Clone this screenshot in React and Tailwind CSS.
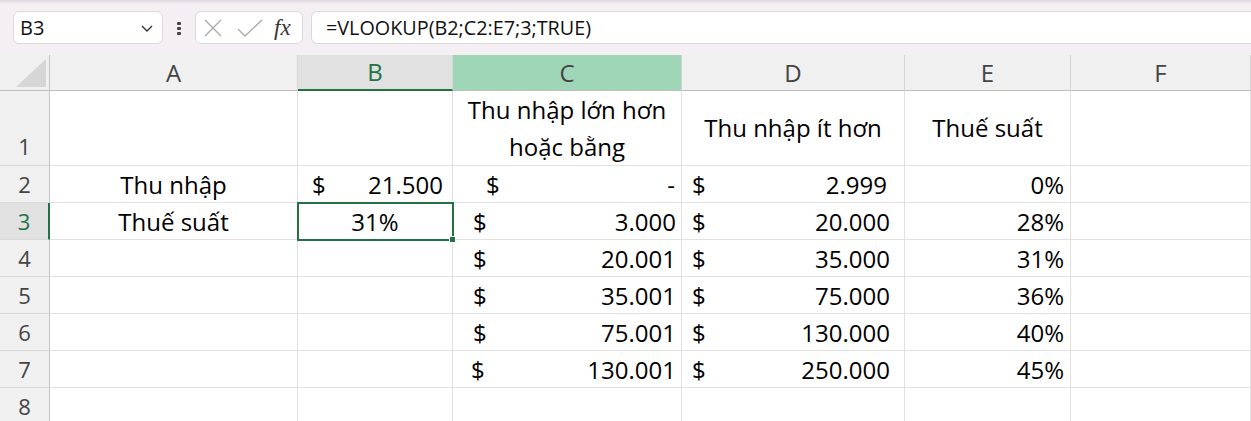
import React from "react";

const cols = ["A", "B", "C", "D", "E", "F"];

// accounting-style cell: "$" on the left, number on the right
function Money({ value, pl, pr }) {
  return (
    <div className={`flex h-full items-center justify-between ${pl} ${pr}`}>
      <span>$</span>
      <span>{value}</span>
    </div>
  );
}

const rows = [
  { c: "3.000", d: "20.000", e: "28%" },
  { c: "20.001", d: "35.000", e: "31%" },
  { c: "35.001", d: "75.000", e: "36%" },
  { c: "75.001", d: "130.000", e: "40%" },
  { c: "130.001", d: "250.000", e: "45%" },
];

function RowHead({ n, selected, tall }) {
  return (
    <div
      className={`flex justify-center border-b border-[#d9d9d9] text-[22px] leading-[37px] ${
        tall ? "items-end" : "items-center"
      } ${
        selected
          ? "border-r-2 border-r-[#217346] bg-[#e1e1e1] text-[#217346]"
          : "border-r border-r-[#c4c4c4] bg-[#f0f0f0] text-[#444]"
      }`}
    >
      {n}
    </div>
  );
}

const cell = "border-r border-b border-[#e1e1e1] bg-white";

export default function App() {
  return (
    <div
      className="h-[421px] w-[1251px] overflow-hidden bg-white text-black"
      style={{ fontFamily: '"Open Sans", "Noto Sans", sans-serif' }}
    >
      {/* formula bar */}
      <div className="relative h-[55px] bg-[#f3eff3]">
        <div className="h-[4px] bg-gradient-to-b from-[#dcd7dc] to-[#f3eff3]" />
        <div className="flex items-center pt-[7px]">
          <div className="ml-[13px] flex h-[33px] w-[150px] items-center justify-between rounded-[6px] border border-[#dcd8dc] bg-white pl-[6px] pr-[8px]">
            <span className="text-[20px] leading-none text-[#111]">B3</span>
            <svg width="14" height="10" viewBox="0 0 14 10">
              <path d="M2 3 L7 8 L12 3" fill="none" stroke="#333" strokeWidth="1.4" />
            </svg>
          </div>
          <div className="flex w-[32px] flex-col items-center gap-[2px] pt-[2px]">
            <span className="h-[3px] w-[4px] rounded-[1px] bg-[#444]" />
            <span className="h-[3px] w-[4px] rounded-[1px] bg-[#444]" />
            <span className="h-[3px] w-[4px] rounded-[1px] bg-[#444]" />
          </div>
          <div className="flex h-[33px] w-[108px] items-center rounded-[6px] border border-[#dcd8dc] bg-white pl-[7px]">
            <svg width="20" height="20" viewBox="0 0 20 20">
              <path d="M2 2 L18 18 M18 2 L2 18" stroke="#ababab" strokeWidth="1.4" fill="none" />
            </svg>
            <svg className="ml-[14px]" width="26" height="20" viewBox="0 0 26 20">
              <path d="M1 11 L8 18 L25 2" stroke="#ababab" strokeWidth="1.4" fill="none" />
            </svg>
            <span
              className="ml-[11px] text-[23px] italic leading-none text-[#333]"
              style={{ fontFamily: '"Liberation Serif", "DejaVu Serif", serif' }}
            >
              fx
            </span>
          </div>
          <div className="ml-[8px] flex h-[33px] flex-1 items-center rounded-l-[6px] border border-r-0 border-[#dcd8dc] bg-white pl-[14px]">
            <span className="text-[19.8px] leading-none text-[#111]">=VLOOKUP(B2;C2:E7;3;TRUE)</span>
          </div>
        </div>
      </div>

      {/* sheet */}
      <div className="grid grid-cols-[50px_248px_155px_229px_223px_166px_180px] grid-rows-[36px_75px_repeat(7,37px)] text-[24px]">
        {/* corner */}
        <div className="relative border-r border-b border-r-[#c4c4c4] border-b-[#bdbdbd] bg-[#f0f0f0]">
          <svg className="absolute bottom-[3px] right-[3px]" width="30" height="28" viewBox="0 0 30 28">
            <path d="M30 0 L30 28 L0 28 Z" fill="#d6d6d6" />
          </svg>
        </div>
        {cols.map((c) => {
          const bg =
            c === "B"
              ? "bg-[#e1e1e1] text-[#217346] border-b-2 border-b-[#217346]"
              : c === "C"
              ? "bg-[#a0d6b8] text-[#444] border-b border-b-[#bdbdbd]"
              : "bg-[#f0f0f0] text-[#444] border-b border-b-[#bdbdbd]";
          return (
            <div
              key={c}
              className={`flex items-center justify-center border-r border-r-[#d6d6d6] text-[24px] ${bg}`}
            >
              {c}
            </div>
          );
        })}

        {/* row 1 */}
        <RowHead n="1" tall />
        <div className={cell} />
        <div className={cell} />
        <div className={`${cell} flex flex-col items-center justify-center leading-[37px]`}>
          <span>Thu nhập lớn hơn</span>
          <span>hoặc bằng</span>
        </div>
        <div className={`${cell} flex items-center justify-center`}>Thu nhập ít hơn</div>
        <div className={`${cell} flex items-center justify-center`}>Thuế suất</div>
        <div className={cell} />

        {/* row 2 */}
        <RowHead n="2" />
        <div className={`${cell} flex items-center justify-center leading-[37px]`}>Thu nhập</div>
        <div className={`${cell} leading-[37px]`}>
          <Money value="21.500" pl="pl-[14px]" pr="pr-[9px]" />
        </div>
        <div className={`${cell} leading-[37px]`}>
          <Money value="-" pl="pl-[33px]" pr="pr-[6px]" />
        </div>
        <div className={`${cell} leading-[37px]`}>
          <Money value="2.999" pl="pl-[10px]" pr="pr-[17px]" />
        </div>
        <div className={`${cell} flex items-center justify-end pr-[6px] leading-[37px]`}>0%</div>
        <div className={cell} />

        {/* rows 3-7 */}
        {rows.map((r, i) => (
          <React.Fragment key={i}>
            <RowHead n={String(i + 3)} selected={i === 0} />
            <div className={`${cell} flex items-center justify-center leading-[37px]`}>
              {i === 0 ? "Thuế suất" : ""}
            </div>
            <div className={`${cell} relative flex items-center justify-center leading-[37px] ${i === 0 ? "z-10" : ""}`}>
              {i === 0 && (
                <>
                  <span>31%</span>
                  <div className="absolute -left-[1px] -top-[1px] h-[39px] w-[157px] border-2 border-[#217346]" />
                  <div className="absolute -bottom-[4px] -right-[4px] h-[7px] w-[7px] border border-white bg-[#217346]" />
                </>
              )}
            </div>
            <div className={`${cell} leading-[37px]`}>
              <Money value={r.c} pl={i === 4 ? "pl-[18px]" : "pl-[20px]"} pr="pr-[5px]" />
            </div>
            <div className={`${cell} leading-[37px]`}>
              <Money value={r.d} pl="pl-[10px]" pr="pr-[14px]" />
            </div>
            <div className={`${cell} flex items-center justify-end pr-[6px] leading-[37px]`}>{r.e}</div>
            <div className={cell} />
          </React.Fragment>
        ))}

        {/* row 8 */}
        <RowHead n="8" />
        <div className={cell} />
        <div className={cell} />
        <div className={cell} />
        <div className={cell} />
        <div className={cell} />
        <div className={cell} />
      </div>
    </div>
  );
}
